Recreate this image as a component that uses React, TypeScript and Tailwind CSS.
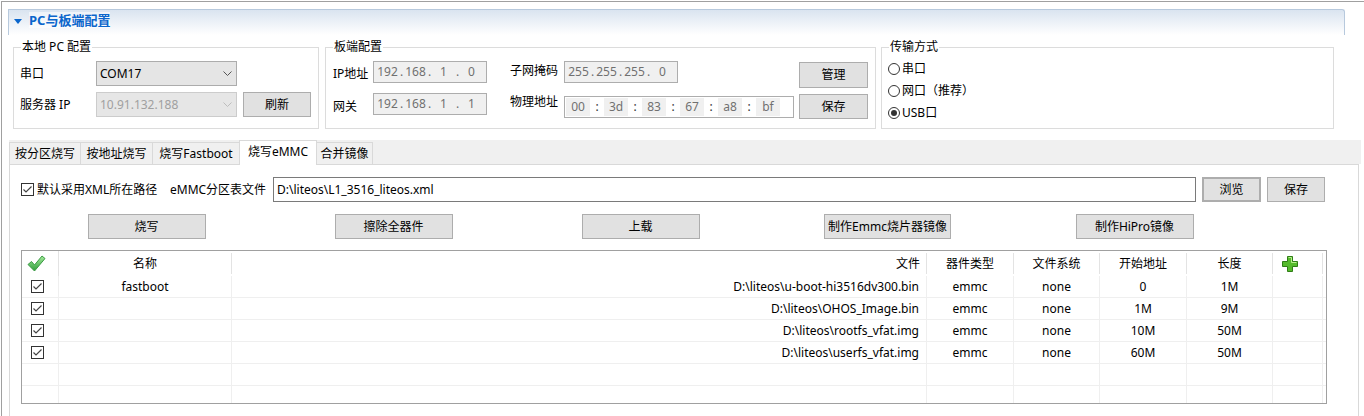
import type { ReactNode } from 'react';

const tabs = ['按分区烧写', '按地址烧写', '烧写Fastboot', '烧写eMMC', '合并镜像'];
const tabWidths = ['w-[71px]', 'w-[72px]', 'w-[87px]', 'w-[78px]', 'w-[56px]'];

const rows = [
  { name: 'fastboot', file: 'D:\\liteos\\u-boot-hi3516dv300.bin', type: 'emmc', fs: 'none', start: '0', len: '1M' },
  { name: '', file: 'D:\\liteos\\OHOS_Image.bin', type: 'emmc', fs: 'none', start: '1M', len: '9M' },
  { name: '', file: 'D:\\liteos\\rootfs_vfat.img', type: 'emmc', fs: 'none', start: '10M', len: '50M' },
  { name: '', file: 'D:\\liteos\\userfs_vfat.img', type: 'emmc', fs: 'none', start: '60M', len: '50M' },
  null,
  null,
];

const Button = ({ children, className = '' }: { children: ReactNode; className?: string }) => (
  <div className={`flex h-[25px] items-center justify-center border border-[#adadad] bg-[#e1e1e1] ${className}`}>
    {children}
  </div>
);

const Chevron = ({ color }: { color: string }) => (
  <svg width="9" height="5" viewBox="0 0 9 5" className="mr-[4px]">
    <polyline points="0.5,0.5 4.5,4.5 8.5,0.5" fill="none" stroke={color} strokeWidth="1" />
  </svg>
);

const CheckBox = () => (
  <div className="flex h-[13px] w-[13px] items-center justify-center border border-[#333333] bg-white">
    <svg width="11" height="11" viewBox="0 0 11 11">
      <polyline points="1.5,5.5 4,8 9.5,2.5" fill="none" stroke="#444444" strokeWidth="1.2" />
    </svg>
  </div>
);

const Radio = ({ checked }: { checked?: boolean }) => (
  <div className="flex h-[12px] w-[12px] items-center justify-center rounded-full border border-[#333333] bg-white">
    {checked && <div className="h-[6px] w-[6px] rounded-full bg-[#333333]" />}
  </div>
);

const IpField = ({ parts }: { parts: string[] }) => (
  <div className="flex h-[22px] w-[114px] items-stretch border border-[#adadad] bg-[#f0f0f0] pl-px text-[#707070]">
    {parts.map((p, i) => (
      <div key={i} className="flex items-center">
        {i > 0 && <span className="w-[3px] text-center leading-none">.</span>}
        <span className="w-[25px] text-center">{p}</span>
      </div>
    ))}
  </div>
);

const MacField = ({ parts }: { parts: string[] }) => (
  <div className="flex h-[22px] w-[230px] items-stretch border border-[#adadad] bg-white py-px pl-px text-[#707070]">
    {parts.map((p, i) => (
      <div key={i} className="flex items-stretch">
        {i > 0 && <span className="flex w-[14px] items-center justify-center text-[#333333]">:</span>}
        <span className="flex w-[24px] items-center justify-center bg-[#f0f0f0]">{p}</span>
      </div>
    ))}
  </div>
);

const Group = ({ title, className, children }: { title: string; className: string; children: ReactNode }) => (
  <fieldset className={`h-[90px] border border-[#dcdcdc] ${className}`}>
    <legend className="ml-[7px] px-px leading-4">{title}</legend>
    {children}
  </fieldset>
);

const GreenCheck = () => (
  <svg width="19" height="17" viewBox="0 0 19 17">
    <defs>
      <linearGradient id="gc" x1="0" y1="0" x2="0" y2="1">
        <stop offset="0" stopColor="#a6ec9c" />
        <stop offset="1" stopColor="#2f9d3a" />
      </linearGradient>
    </defs>
    <path d="M1 9.5 L4.5 6.5 L7.5 10 L15 1 L18 3.5 L7.5 16 Z" fill="url(#gc)" stroke="#3a9a44" strokeWidth="1" strokeLinejoin="round" />
  </svg>
);

const GreenPlus = () => (
  <svg width="16" height="16" viewBox="0 0 16 16">
    <path d="M5.5 0.5 H10.5 V5.5 H15.5 V10.5 H10.5 V15.5 H5.5 V10.5 H0.5 V5.5 H5.5 Z" fill="#55bb2c" stroke="#2f7d16" strokeWidth="1" />
    <path d="M6.5 1.5 H9.5 V6.5 H14.5" fill="none" stroke="#b9f08f" strokeWidth="1" />
  </svg>
);

const colW = ['w-[37px]', 'w-[173px]', 'w-[695px]', 'w-[87px]', 'w-[86px]', 'w-[87px]', 'w-[86px]', 'w-[50px]'];

const App = () => {
  return (
    <div className="h-[416px] w-[1364px] overflow-hidden bg-white pl-px pt-px font-['Noto_Sans','Noto_Sans_CJK_SC',sans-serif] text-[12px] leading-4 text-black">
      <div className="h-[415px] border-l border-t border-[#a0a0a0]">
        {/* header bar */}
        <div className="ml-[6px] mt-[7px] flex h-[26px] w-[1337px] items-start gap-[7px] rounded-tr-[3px] border-l border-r border-t border-[#b7c9dd] bg-gradient-to-b from-[#dae4f0] to-white pl-[5px] pt-[2px]">
          <svg width="8" height="5" viewBox="0 0 8 5" className="mt-[7px]">
            <polygon points="0,0 8,0 4,5" fill="#0b66cc" />
          </svg>
          <span className="bg-white/50 text-[13px] font-bold leading-4 text-[#0b66cc]">PC与板端配置</span>
        </div>

        {/* config groups */}
        <div className="ml-[11px] mt-[4px] flex">
          <Group title="本地 PC 配置" className="w-[306px]">
            <div className="flex flex-col gap-[6px] pl-[6px] pt-[6px]">
              <div className="flex items-center">
                <span className="w-[76px]">串口</span>
                <div className="flex h-[25px] w-[141px] items-center justify-between border border-[#acacac] bg-[#e5e5e5] pl-[3px]">
                  <span>COM17</span>
                  <Chevron color="#555555" />
                </div>
              </div>
              <div className="flex items-center">
                <span className="w-[76px]">服务器 IP</span>
                <div className="flex h-[25px] w-[141px] items-center justify-between border border-[#cccccc] bg-[#e6e6e6] pl-[3px] text-[#a0a0a0]">
                  <span>10.91.132.188</span>
                  <Chevron color="#bdbdbd" />
                </div>
                <Button className="ml-[6px] w-[68px]">刷新</Button>
              </div>
            </div>
          </Group>

          <Group title="板端配置" className="ml-[6px] w-[551px]">
            <div className="pl-[7px] pt-[6px]">
              <div className="flex items-start">
                <span className="mt-[5px] w-[40px]">IP地址</span>
                <IpField parts={['192', '168', '1', '0']} />
                <span className="ml-[23px] mt-[2px] w-[54px]">子网掩码</span>
                <div className="w-[235px]">
                  <IpField parts={['255', '255', '255', '0']} />
                </div>
                <Button className="mt-px h-[26px] w-[69px]">管理</Button>
              </div>
              <div className="mt-[4px] flex items-start">
                <span className="mt-[7px] w-[40px]">网关</span>
                <div className="mt-px">
                  <IpField parts={['192', '168', '1', '1']} />
                </div>
                <span className="ml-[23px] mt-[2px] w-[54px]">物理地址</span>
                <div className="mt-[4px] w-[235px]">
                  <MacField parts={['00', '3d', '83', '67', 'a8', 'bf']} />
                </div>
                <Button className="mt-[2px] w-[69px]">保存</Button>
              </div>
            </div>
          </Group>

          <Group title="传输方式" className="ml-[5px] w-[453px]">
            <div className="flex flex-col pl-[6px] pt-[3px]">
              {[
                { label: '串口', checked: false },
                { label: '网口（推荐）', checked: false },
                { label: 'USB口', checked: true },
              ].map((r) => (
                <div key={r.label} className="flex h-[22px] items-center gap-[2px]">
                  <Radio checked={r.checked} />
                  <span>{r.label}</span>
                </div>
              ))}
            </div>
          </Group>
        </div>

        {/* tab control */}
        <div className="ml-[7px] mt-[11px] w-[1352px]">
          <div className="flex h-[24px] items-end bg-[#f0f0f0]">
            {tabs.map((t, i) =>
              i === 3 ? (
                <div
                  key={t}
                  className={`relative z-10 -mb-px flex h-[25px] items-center justify-center border-l border-r border-t border-[#d9d9d9] bg-white pb-[2px] ${tabWidths[i]}`}
                >
                  {t}
                </div>
              ) : (
                <div
                  key={t}
                  className={`flex h-[22px] items-center justify-center border-t border-[#d9d9d9] bg-[#f0f0f0] ${i === 4 ? 'border-r' : ''} ${i < 3 ? 'border-l' : ''} ${tabWidths[i]}`}
                >
                  {t}
                </div>
              ),
            )}
          </div>

          <div className="h-[260px] w-[1350px] border-l border-r border-t border-[#d9d9d9] bg-white pl-[11px] pt-[12px]">
            <div className="flex h-[25px] items-center">
              <CheckBox />
              <span className="ml-[3px] w-[133px]">默认采用XML所在路径</span>
              <span className="w-[103px]">eMMC分区表文件</span>
              <div className="flex h-[25px] w-[923px] items-center border border-[#7a7a7a] bg-white pl-[3px]">
                D:\liteos\L1_3516_liteos.xml
              </div>
              <Button className="ml-[6px] w-[59px] border-2 border-[#0078d7]">浏览</Button>
              <Button className="ml-[6px] w-[58px]">保存</Button>
            </div>

            <div className="ml-[2px] mt-[12px] grid grid-cols-[repeat(5,247px)] justify-items-center">
              <Button className="w-[118px]">烧写</Button>
              <Button className="w-[118px]">擦除全器件</Button>
              <Button className="w-[118px]">上载</Button>
              <Button className="w-[127px]">制作Emmc烧片器镜像</Button>
              <Button className="w-[118px]">制作HiPro镜像</Button>
            </div>

            <div className="mt-[11px] h-[154px] w-[1306px] overflow-hidden border border-[#a0a0a0]">
              <div className="flex h-[25px]">
                <div className={`${colW[0]} flex items-center border-r border-[#e3e3e3] pl-[5px]`}>
                  <GreenCheck />
                </div>
                <div className={`${colW[1]} my-[2px] flex items-center justify-center border-r border-[#e3e3e3]`}>名称</div>
                <div className={`${colW[2]} my-[2px] flex items-center justify-end border-r border-[#e3e3e3] pr-[6px]`}>文件</div>
                <div className={`${colW[3]} my-[2px] flex items-center justify-center border-r border-[#e3e3e3]`}>器件类型</div>
                <div className={`${colW[4]} my-[2px] flex items-center justify-center border-r border-[#e3e3e3]`}>文件系统</div>
                <div className={`${colW[5]} my-[2px] flex items-center justify-center border-r border-[#e3e3e3]`}>开始地址</div>
                <div className={`${colW[6]} my-[2px] flex items-center justify-center border-r border-[#e3e3e3]`}>长度</div>
                <div className={`${colW[7]} my-[2px] flex items-center border-r border-[#e3e3e3] pl-[9px]`}>
                  <GreenPlus />
                </div>
              </div>
              {rows.map((r, idx) => (
                <div key={idx} className="flex h-[22px] border-b border-[#efefef]">
                  <div className={`${colW[0]} flex items-center border-r border-[#efefef] pl-[9px]`}>
                    {r && <CheckBox />}
                  </div>
                  <div className={`${colW[1]} flex items-center justify-center border-r border-[#efefef]`}>{r?.name}</div>
                  <div className={`${colW[2]} flex items-center justify-end border-r border-[#efefef] pr-[7px]`}>{r?.file}</div>
                  <div className={`${colW[3]} flex items-center justify-center border-r border-[#efefef]`}>{r?.type}</div>
                  <div className={`${colW[4]} flex items-center justify-center border-r border-[#efefef]`}>{r?.fs}</div>
                  <div className={`${colW[5]} flex items-center justify-center border-r border-[#efefef]`}>{r?.start}</div>
                  <div className={`${colW[6]} flex items-center justify-center border-r border-[#efefef]`}>{r?.len}</div>
                  <div className={`${colW[7]} border-r border-[#efefef]`} />
                </div>
              ))}
            </div>
          </div>
        </div>
      </div>
    </div>
  );
};

export default App;
